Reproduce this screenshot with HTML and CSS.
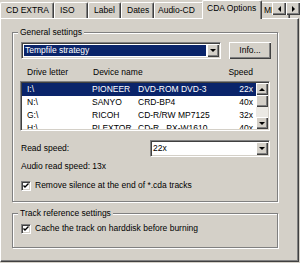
FILE: index.html
```html
<!DOCTYPE html>
<html>
<head>
<meta charset="utf-8">
<link rel="stylesheet" href="styles.css">
</head>
<body>
<div class="window">
  <div class="tabs">
    <div class="tab t-extra">CD EXTRA</div>
    <div class="tab t-iso">ISO</div>
    <div class="tab t-label">Label</div>
    <div class="tab t-dates">Dates</div>
    <div class="tab t-audio">Audio-CD</div>
    <div class="tab active t-cda">CDA Options</div>
    <div class="tab t-mp3">MP3</div>
    <div class="tab-scroll">
      <span class="sbtn"><i class="tri-left"></i></span>
      <span class="sbtn"><i class="tri-right"></i></span>
    </div>
  </div>
  <div class="panel">
    <div class="group g1">
      <div class="gtitle">General settings</div>
      <div class="row1">
        <div class="combo wide focus">
          <span class="ctext">Tempfile strategy</span>
          <span class="cbtn"><i class="tri-down"></i></span>
        </div>
        <div class="button">Info...</div>
      </div>
      <div class="cols">
        <span class="h1">Drive letter</span>
        <span class="h2">Device name</span>
        <span class="h3">Speed</span>
      </div>
      <div class="list">
        <div class="rows">
          <div class="lrow sel"><span class="c1">I:\</span><span class="c2"><span class="vendor">PIONEER</span>DVD-ROM DVD-3</span><span class="c3">22x</span></div>
          <div class="lrow"><span class="c1">N:\</span><span class="c2"><span class="vendor">SANYO</span>CRD-BP4</span><span class="c3">40x</span></div>
          <div class="lrow"><span class="c1">G:\</span><span class="c2"><span class="vendor">RICOH</span>CD-R/RW MP7125</span><span class="c3">32x</span></div>
          <div class="lrow"><span class="c1">H:\</span><span class="c2"><span class="vendor">PLEXTOR</span>CD-R&nbsp;&nbsp;&nbsp;PX-W1610</span><span class="c3">40x</span></div>
        </div>
        <div class="vscroll">
          <span class="sb-btn"><i class="tri-up"></i></span>
          <span class="sb-thumb"></span>
          <span class="sb-track"></span>
          <span class="sb-btn"><i class="tri-down"></i></span>
        </div>
      </div>
      <div class="speedrow">
        <span>Read speed:</span>
        <div class="combo narrow">
          <span class="ctext">22x</span>
          <span class="cbtn"><i class="tri-down"></i></span>
        </div>
      </div>
      <div class="textline">Audio read speed: 13x</div>
      <div class="check c-first">
        <span class="box"><svg width="6" height="6" viewBox="0 0 6 6"><polyline points="0.5,2.5 2,4 5.5,0.5" fill="none" stroke="#000" stroke-width="1.4"/></svg></span>
        <span>Remove silence at the end of *.cda tracks</span>
      </div>
    </div>
    <div class="group g2">
      <div class="gtitle">Track reference settings</div>
      <div class="check c-second">
        <span class="box"><svg width="6" height="6" viewBox="0 0 6 6"><polyline points="0.5,2.5 2,4 5.5,0.5" fill="none" stroke="#000" stroke-width="1.4"/></svg></span>
        <span>Cache the track on harddisk before burning</span>
      </div>
    </div>
  </div>
</div>
</body>
</html>
```
FILE: styles.css
```css
* { box-sizing: border-box; }
html, body {
  margin: 0;
  padding: 0;
  background: #d4d0c8;
}
body {
  width: 300px;
  height: 263px;
  overflow: hidden;
  font-family: "Liberation Sans", Arial, sans-serif;
  font-size: 8.5px;
  line-height: 13px;
  color: #000;
}
.window {
  width: 300px;
  height: 263px;
  position: relative;
}
.tabs {
  display: flex;
  align-items: flex-end;
  height: 18px;
  width: 300px;
  position: relative;
  z-index: 2;
}
.tab {
  height: 16px;
  padding: 1px 0 0 5px;
  border-left: 1px solid #fff;
  border-top: 1px solid #fff;
  border-right: 1px solid #404040;
  border-radius: 2px 2px 0 0;
  box-shadow: inset -1px 0 0 #808080;
  white-space: nowrap;
  overflow: hidden;
  background: #d4d0c8;
  flex: none;
}
.t-extra { width: 54px; }
.t-iso { width: 34px; }
.t-label { width: 33px; }
.t-dates { width: 33px; }
.t-audio { width: 50px; padding-left: 3px; }
.t-cda { width: 60px; }
.t-mp3 { width: 30px; padding-left: 3px; }
.tab.active {
  height: 19px;
  margin: 0 -2px -1px -2px;
  position: relative;
  z-index: 3;
  padding-left: 4px;
}
.tab-scroll {
  position: absolute;
  right: 0;
  top: 2px;
  display: flex;
  z-index: 4;
}
.sbtn {
  width: 14px;
  height: 13px;
  background: #d4d0c8;
  box-shadow: inset 1px 1px 0 #fff, inset -1px -1px 0 #404040, inset -2px -2px 0 #808080;
  display: flex;
  align-items: center;
  justify-content: center;
}
.tri-left {
  width: 0; height: 0;
  border-top: 3px solid transparent;
  border-bottom: 3px solid transparent;
  border-right: 3px solid #000;
}
.tri-right {
  width: 0; height: 0;
  border-top: 3px solid transparent;
  border-bottom: 3px solid transparent;
  border-left: 3px solid #000;
}
.tri-down {
  width: 0; height: 0;
  border-left: 3px solid transparent;
  border-right: 3px solid transparent;
  border-top: 3px solid #000;
}
.tri-up {
  width: 0; height: 0;
  border-left: 3px solid transparent;
  border-right: 3px solid transparent;
  border-bottom: 3px solid #000;
}
.panel {
  width: 299px;
  height: 244px;
  border-left: 1px solid #fff;
  border-top: 1px solid #fff;
  border-right: 1px solid #404040;
  border-bottom: 1px solid #404040;
  box-shadow: inset -1px -1px 0 #808080;
  padding: 13px 0 0 11px;
}
.group {
  width: 266px;
  border: 1px solid #808080;
  box-shadow: 1px 1px 0 #fff, inset 1px 1px 0 #fff;
  padding: 0 6px 9px 8px;
}
.g2 {
  margin-top: 11px;
  padding-bottom: 12px;
}
.gtitle {
  width: max-content;
  height: 11px;
  line-height: 11px;
  margin: -6px 0 0 -3px;
  padding: 0 2px;
  background: #d4d0c8;
}
.row1 {
  display: flex;
  justify-content: space-between;
  margin-top: 4px;
  height: 17px;
}
.combo {
  height: 17px;
  display: flex;
  align-items: stretch;
  border-top: 1px solid #808080;
  border-left: 1px solid #808080;
  border-bottom: 1px solid #fff;
  border-right: 1px solid #fff;
  box-shadow: inset 1px 1px 0 #404040, inset -1px -1px 0 #d4d0c8;
  padding: 1px;
  background: #fff;
}
.combo.wide { width: 200px; }
.combo.narrow { width: 120px; }
.ctext {
  flex: 1;
  padding-left: 1px;
  line-height: 13px;
  white-space: nowrap;
}
.combo.focus .ctext {
  background: #0a246a;
  color: #fff;
  margin: 1px;
  line-height: 11px;
  padding-left: 1px;
}
.cbtn {
  width: 12px;
  background: #d4d0c8;
  box-shadow: inset 1px 1px 0 #fff, inset -1px -1px 0 #404040, inset -2px -2px 0 #808080;
  display: flex;
  align-items: center;
  justify-content: center;
}
.button {
  width: 42px;
  height: 17px;
  background: #d4d0c8;
  box-shadow: inset 1px 1px 0 #fff, inset -1px -1px 0 #404040, inset -2px -2px 0 #808080;
  text-align: center;
  line-height: 16px;
}
.cols {
  display: grid;
  grid-template-columns: 66px 1fr auto;
  margin-top: 7px;
  padding: 0 17px 0 6px;
  width: 249px;
  height: 13px;
}
.list {
  margin: 2px 0 0 -1px;
  width: 250px;
  height: 50px;
  display: flex;
  border-top: 1px solid #808080;
  border-left: 1px solid #808080;
  border-bottom: 1px solid #fff;
  border-right: 1px solid #fff;
  box-shadow: inset 1px 1px 0 #404040, inset -1px -1px 0 #d4d0c8;
  padding: 1px;
  background: #fff;
}
.rows {
  flex: 1;
  overflow: hidden;
  height: 46px;
}
.lrow {
  display: grid;
  grid-template-columns: 65px 1fr auto;
  height: 13px;
  line-height: 13px;
  padding: 0 3px 0 5px;
  white-space: nowrap;
}
.lrow.sel {
  background: #0a246a;
  color: #fff;
}
.c2 { overflow: hidden; }
.vendor {
  display: inline-block;
  width: 46px;
}
.vscroll {
  width: 12px;
  display: flex;
  flex-direction: column;
}
.sb-btn, .sb-thumb {
  height: 12px;
  flex: none;
  background: #d4d0c8;
  box-shadow: inset 1px 1px 0 #fff, inset -1px -1px 0 #404040, inset -2px -2px 0 #808080;
  display: flex;
  align-items: center;
  justify-content: center;
}
.sb-track {
  flex: 1;
  background: #ebe9e4;
}
.speedrow {
  display: flex;
  justify-content: space-between;
  align-items: center;
  margin-top: 9px;
  height: 17px;
  width: 249px;
}
.textline {
  margin-top: 3px;
  height: 13px;
}
.check {
  display: flex;
  align-items: center;
  height: 13px;
  white-space: nowrap;
}
.c-first { margin-top: 6px; }
.c-second { margin-top: 3px; }
.box {
  width: 10px;
  height: 10px;
  flex: none;
  margin-right: 4px;
  background: #fff;
  border-top: 1px solid #808080;
  border-left: 1px solid #808080;
  border-bottom: 1px solid #fff;
  border-right: 1px solid #fff;
  box-shadow: inset 1px 1px 0 #404040, inset -1px -1px 0 #d4d0c8;
  display: flex;
  align-items: center;
  justify-content: center;
}
.box svg { display: block; }
```
